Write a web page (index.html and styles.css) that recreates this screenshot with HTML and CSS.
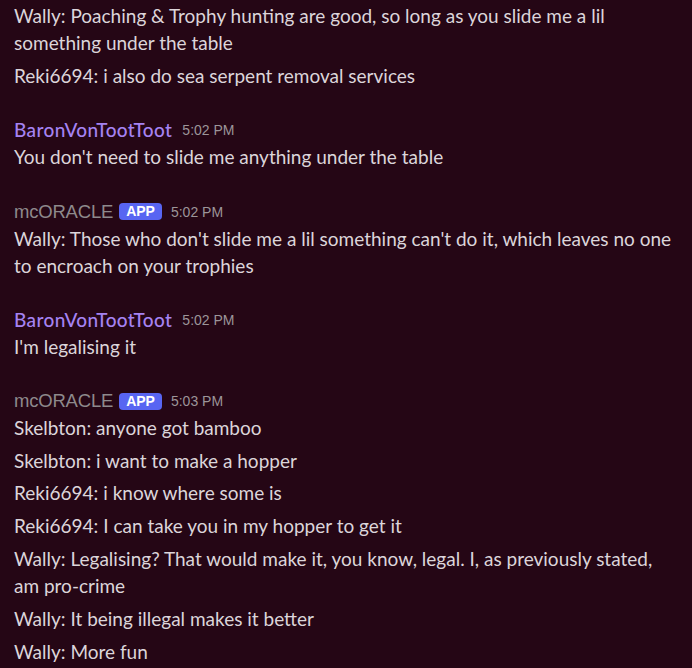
FILE: index.html
```html
<!DOCTYPE html>
<html lang="en">
<head>
<meta charset="utf-8">
<title>Chat</title>
<link rel="stylesheet" href="styles.css">
</head>
<body>
<div class="chat">
  <div class="group first">
    <div class="msg"><div class="text">Wally: Poaching &amp; Trophy hunting are good, so long as you slide me a lil something under the table</div></div>
    <div class="msg"><div class="text">Reki6694: i also do sea serpent removal services</div></div>
  </div>

  <div class="group">
    <div class="msg">
      <div class="head"><span class="name user">BaronVonTootToot</span><span class="time">5:02 PM</span></div>
      <div class="text">You don't need to slide me anything under the table</div>
    </div>
  </div>

  <div class="group">
    <div class="msg">
      <div class="head bot"><span class="name app">mcORACLE</span><span class="badge">APP</span><span class="time">5:02 PM</span></div>
      <div class="text">Wally: Those who don't slide me a lil something can't do it, which leaves no one to encroach on your trophies</div>
    </div>
  </div>

  <div class="group">
    <div class="msg">
      <div class="head"><span class="name user">BaronVonTootToot</span><span class="time">5:02 PM</span></div>
      <div class="text">I'm legalising it</div>
    </div>
  </div>

  <div class="group">
    <div class="msg">
      <div class="head bot"><span class="name app">mcORACLE</span><span class="badge">APP</span><span class="time">5:03 PM</span></div>
      <div class="text">Skelbton: anyone got bamboo</div>
    </div>
    <div class="msg"><div class="text">Skelbton: i want to make a hopper</div></div>
    <div class="msg"><div class="text">Reki6694: i know where some is</div></div>
    <div class="msg"><div class="text">Reki6694: I can take you in my hopper to get it</div></div>
    <div class="msg"><div class="text">Wally: Legalising? That would make it, you know, legal. I, as previously stated, am pro-crime</div></div>
    <div class="msg"><div class="text">Wally: It being illegal makes it better</div></div>
    <div class="msg"><div class="text">Wally: More fun</div></div>
  </div>
</div>
</body>
</html>
```
FILE: styles.css
```css
html, body {
  margin: 0;
  padding: 0;
  background: #250615;
  height: 100%;
  overflow: hidden;
}

.chat {
  margin-top: -0.5px;
  padding: 0 16px 0 14px;
  font-family: Lato, "Noto Sans", sans-serif;
  font-size: 19px;
  color: #dcd5da;
}

.group {
  margin-top: 21.4px;
}

.group.first {
  margin-top: 0;
}

.msg {
  padding: 2.9px 0;
}

.text {
  line-height: 27px;
}

.head {
  display: flex;
  align-items: center;
  height: 27px;
  line-height: 27px;
}

.head.bot {
  padding-top: 1.5px;
  height: 25.5px;
  line-height: 25.5px;
}

.name {
  font-weight: 500;
}

.name.user {
  color: #a583f2;
  letter-spacing: 0.4px;
}

.name.app {
  color: #8e898c;
  font-family: "Liberation Sans", Arial, sans-serif;
  font-size: 18.5px;
  letter-spacing: -0.2px;
}

.badge {
  margin-left: 6px;
  height: 17px;
  padding: 0 7px;
  border-radius: 4px;
  background: #5865f2;
  color: #ffffff;
  font-family: "Liberation Sans", Arial, sans-serif;
  font-weight: 700;
  font-size: 14px;
  line-height: 17px;
}

.time {
  margin-left: 10px;
  color: #9c9599;
  font-family: "Liberation Sans", Arial, sans-serif;
  font-size: 14px;
  position: relative;
  top: 1px;
}

.bot .time {
  margin-left: 9px;
}
```
